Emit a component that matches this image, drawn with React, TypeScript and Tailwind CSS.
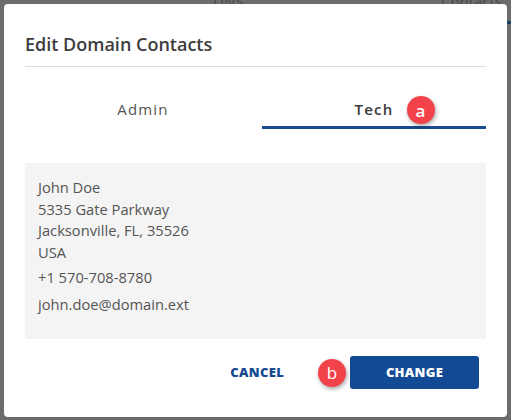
import React from 'react';

const font = { fontFamily: '"Open Sans", "Noto Sans", Arial, sans-serif' };

function Badge({ letter }: { letter: string }) {
  return (
    <span className="flex h-[28px] w-[28px] items-center justify-center rounded-full bg-[#f2434b] text-[17px] leading-none text-white shadow-[1px_2px_4px_rgba(0,0,0,0.35)]">
      {letter}
    </span>
  );
}

export default function App() {
  return (
    <div className="relative h-[420px] w-[511px] overflow-hidden bg-[#6c6c6c]" style={font}>
      {/* page behind the overlay */}
      <div className="absolute left-[213px] top-[-10px] text-[15px] text-[#4a4a4a]">DNS</div>
      <div className="absolute left-[441px] top-[-10px] text-[15px] text-[#4a4a4a]">Contacts</div>
      <div className="absolute right-0 top-[21px] h-[3px] w-[4px] bg-[#1d3b66]" />

      <div className="relative pl-[4px] pt-[4px]">
        <div className="flex h-[413px] w-[503px] flex-col rounded-[4px] bg-white px-[21px]">
          <h2 className="pt-[28px] text-[18px] font-semibold leading-[24px] text-[#3d3d3d]">Edit Domain Contacts</h2>
          <div className="mt-[10px] h-px bg-[#dedede]" />

          {/* tabs */}
          <div className="ml-[6px] mt-[32px] grid grid-cols-2 gap-[7px]">
            <div className="flex h-[30px] items-start justify-center text-[15px] leading-[21px] tracking-[1.2px] text-[#555]">
              Admin
            </div>
            <div className="relative flex h-[30px] items-start justify-center border-b-[3px] border-[#174a91] text-[15px] font-semibold leading-[21px] tracking-[1.2px] text-[#3a3a3a]">
              Tech
              <span className="absolute left-[145px] top-[-3px]">
                <Badge letter="a" />
              </span>
            </div>
          </div>

          {/* contact card */}
          <div className="mt-[34px] flex h-[176px] flex-col bg-[#f4f4f4] pl-[13px] pt-[14px] text-[14.7px] text-[#555]">
            <div className="leading-[21.5px]">
              <div>John Doe</div>
              <div>5335 Gate Parkway</div>
              <div>Jacksonville, FL, 35526</div>
              <div>USA</div>
            </div>
            <div className="mt-[4px] leading-[21.5px]">+1 570-708-8780</div>
            <div className="mt-[5px] leading-[21.5px]">john.doe@domain.ext</div>
          </div>

          {/* footer */}
          <div className="mt-[17px] flex items-center justify-end pr-[7px]">
            <button className="mr-[34px] text-[13px] font-extrabold tracking-[0.3px] text-[#174a91]">CANCEL</button>
            <span className="mr-[4px]">
              <Badge letter="b" />
            </span>
            <button className="h-[33px] w-[129px] rounded-[3px] bg-[#134a96] text-[13px] font-extrabold tracking-[0.3px] text-white">
              CHANGE
            </button>
          </div>
        </div>
      </div>
    </div>
  );
}
